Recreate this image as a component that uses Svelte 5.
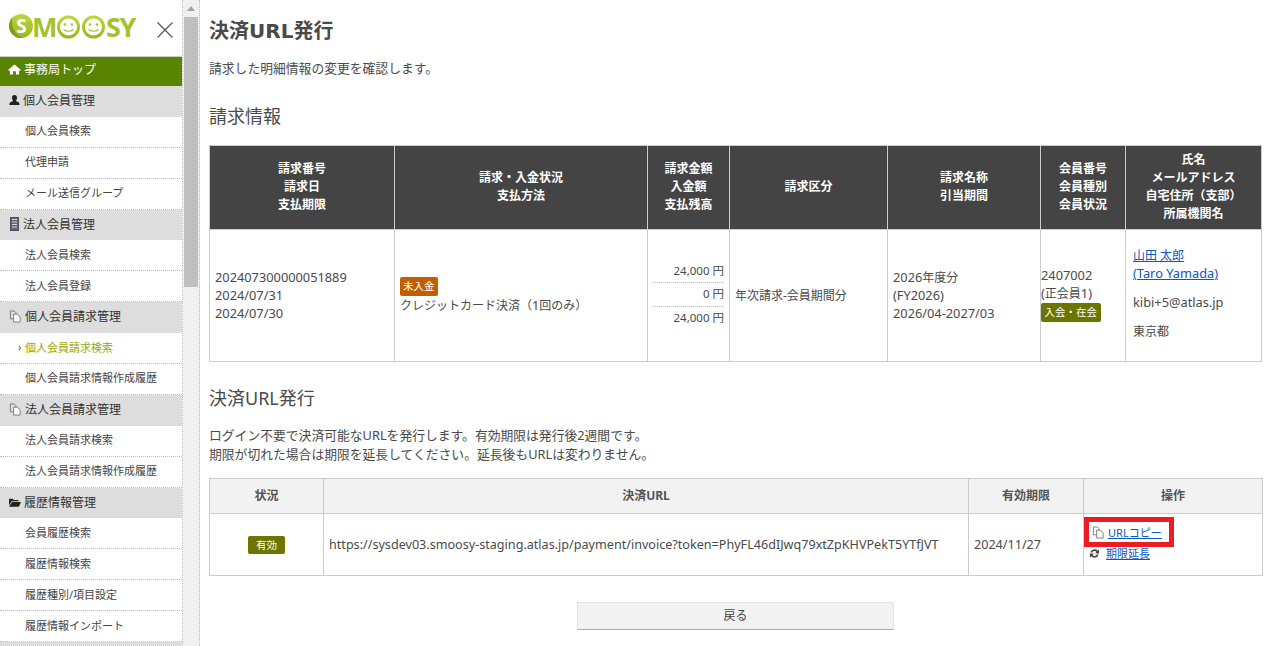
<script>
  const nav = [
    { head: '個人会員管理', icon: 'user', items: ['個人会員検索', '代理申請', 'メール送信グループ'] },
    { head: '法人会員管理', icon: 'building', items: ['法人会員検索', '法人会員登録'] },
    { head: '個人会員請求管理', icon: 'copy', items: ['個人会員請求検索', '個人会員請求情報作成履歴'] },
    { head: '法人会員請求管理', icon: 'copy', items: ['法人会員請求検索', '法人会員請求情報作成履歴'] },
    { head: '履歴情報管理', icon: 'folder', items: ['会員履歴検索', '履歴情報検索', '履歴種別/項目設定', '履歴情報インポート'] }
  ];
  const active = '個人会員請求検索';
</script>

{#snippet copyIcon()}
  <svg class="ico" viewBox="0 0 14 14" width="13" height="13">
    <path d="M1.5 1h4l2 2v1.5M1.5 1v8.5h3" fill="none" stroke="#777" stroke-width="1"/>
    <path d="M5 4.5h4l3 3v5.500H5z" fill="#fff" stroke="#777" stroke-width="1"/>
  </svg>
{/snippet}

<div class="page">
  <aside class="side">
    <div class="logo-row">
      <svg class="logo" viewBox="0 -6 130 40" width="130" height="40">
        <defs>
          <linearGradient id="lg" x1="0" y1="0" x2="0" y2="1">
            <stop offset="0" stop-color="#bcd53f"/>
            <stop offset="1" stop-color="#98b921"/>
          </linearGradient>
        </defs>
        <circle cx="12" cy="13" r="12" fill="url(#lg)"/>
        <path d="M4 4A12 12 0 0 0 14 24.800 16 16 0 0 1 4 4z" fill="#7f9c1a"/>
        <text x="12.500" y="20" class="logo-s" text-anchor="middle">S</text>
        <text x="23" y="24" class="logo-t">M</text>
        <circle cx="59.500" cy="14" r="10" fill="#fff" stroke="url(#lg)" stroke-width="3"/>
        <circle cx="84.500" cy="14" r="10" fill="#fff" stroke="url(#lg)" stroke-width="3"/>
        <g fill="#a5c22e">
          <circle cx="56" cy="11.500" r="1.300"/><circle cx="63" cy="11.500" r="1.300"/>
          <circle cx="81" cy="11.500" r="1.300"/><circle cx="88" cy="11.500" r="1.300"/>
        </g>
        <path d="M54.500 16.500q5 3.500 10 0M79.500 16.500q5 3.500 10 0" fill="none" stroke="#a5c22e" stroke-width="1.200"/>
        <text x="97" y="24" class="logo-t narrow">SY</text>
      </svg>
      <svg class="close" viewBox="0 0 18 18" width="18" height="18">
        <path d="M1.500 1.500l15 15M16.500 1.500l-15 15" stroke="#555" stroke-width="1.200" fill="none"/>
      </svg>
    </div>
    <a class="top" href="#top">
      <svg viewBox="0 0 14 12" width="13" height="11"><path d="M7 .5L0 6.500l1 1 1-.8V11.500h3.500V8h3v3.500H12V6.700l1 .8 1-1z" fill="#fff"/></svg>
      事務局トップ
    </a>
    {#each nav as group}
      <div class="head">
        {#if group.icon === 'user'}
          <svg class="ico" viewBox="0 0 12 12" width="11" height="12"><path d="M6 .5c1.800 0 2.800 1.300 2.800 3S7.800 6.500 7.500 7.200c1.500.6 4 1 4 3.300V11.500H.5V10.500c0-2.300 2.500-2.700 4-3.300C4.200 6.500 3.200 5.200 3.200 3.500S4.200.5 6 .5z" fill="#222"/></svg>
        {:else if group.icon === 'building'}
          <svg class="ico" viewBox="0 0 11 14" width="11" height="14"><rect x="1.500" y="0.500" width="8" height="13" fill="#5f6872" stroke="#4a525b"/><path d="M3 2.500h5M3 5h5M3 7.500h5M3 10h5" stroke="#d5d9de" stroke-width="1"/></svg>
        {:else if group.icon === 'copy'}
          {@render copyIcon()}
        {:else}
          <svg class="ico" viewBox="0 0 14 12" width="12" height="11"><path d="M0 1.500h4.500l1 1.500H11v1.500H3L0 9.500z" fill="#222"/><path d="M3.500 5.500H14L11.500 11H0z" fill="#222"/></svg>
        {/if}
        {group.head}
      </div>
      {#each group.items as item}
        <a class="item" class:active={item === active} href="#item">{item}</a>
      {/each}
    {/each}
    <div class="head"></div>
  </aside>

  <div class="scroll">
    <div class="arrow"></div>
    <div class="thumb"></div>
  </div>

  <main class="main">
    <h1>決済<span class="wide">URL</span>発行</h1>
    <p class="lead">請求した明細情報の変更を確認します。</p>

    <h2>請求情報</h2>
    <table class="t1">
      <colgroup>
        <col style="width:185px"/><col style="width:253px"/><col style="width:82px"/><col style="width:158px"/>
        <col style="width:153px"/><col style="width:85px"/><col style="width:136px"/>
      </colgroup>
      <thead>
        <tr>
          <th>請求番号<br/>請求日<br/>支払期限</th>
          <th>請求・入金状況<br/>支払方法</th>
          <th>請求金額<br/>入金額<br/>支払残高</th>
          <th>請求区分</th>
          <th>請求名称<br/>引当期間</th>
          <th>会員番号<br/>会員種別<br/>会員状況</th>
          <th>氏名<br/>メールアドレス<br/>自宅住所（支部）<br/>所属機関名</th>
        </tr>
      </thead>
      <tbody>
        <tr>
          <td><span class="num">202407300000051889<br/>2024/07/31<br/>2024/07/30</span></td>
          <td class="status"><span class="badge orange">未入金</span><br/>クレジットカード決済（<span class="num">1</span>回のみ）</td>
          <td class="money">
            <div>24,000 円</div>
            <div>0 円</div>
            <div>24,000 円</div>
          </td>
          <td>年次請求-会員期間分</td>
          <td><span class="num">2026</span>年度分<br/><span class="num">(FY2026)<br/>2026/04-2027/03</span></td>
          <td class="member"><span class="num">2407002</span><br/><span class="num">(</span>正会員<span class="num">1)</span><br/><span class="badge olive">入会・在会</span></td>
          <td class="who">
            <p><a href="#member">山田 太郎<br/><span class="num">(Taro Yamada)</span></a></p>
            <p><span class="num">kibi+5@atlas.jp</span></p>
            <p>東京都</p>
          </td>
        </tr>
      </tbody>
    </table>

    <h2 class="second">決済URL発行</h2>
    <p class="note">ログイン不要で決済可能なURLを発行します。有効期限は発行後2週間です。<br/>期限が切れた場合は期限を延長してください。延長後もURLは変わりません。</p>

    <table class="t2">
      <colgroup>
        <col style="width:114px"/><col style="width:645px"/><col style="width:115px"/><col style="width:179px"/>
      </colgroup>
      <thead>
        <tr><th>状況</th><th>決済URL</th><th>有効期限</th><th>操作</th></tr>
      </thead>
      <tbody>
        <tr>
          <td class="center"><span class="badge olive small">有効</span></td>
          <td>https://sysdev03.smoosy-staging.atlas.jp/payment/invoice?token=PhyFL46dIJwq79xtZpKHVPekT5YTfJVT</td>
          <td>2024/11/27</td>
          <td class="ops">
            <div class="op marked">{@render copyIcon()}<a href="#copy">URLコピー</a></div>
            <div class="op">
              <svg class="ico" viewBox="0 0 12 12" width="11" height="11"><path d="M1.500 5A4.700 4.700 0 0 1 9.600 3L11 1.500V6H6.500l1.700-1.700A2.800 2.800 0 0 0 3.400 5zM10.500 7A4.700 4.700 0 0 1 2.400 9L1 10.500V6h4.500L3.800 7.700A2.800 2.800 0 0 0 8.600 7z" fill="#444"/></svg>
              <a href="#extend">期限延長</a>
            </div>
          </td>
        </tr>
      </tbody>
    </table>

    <div class="actions"><button type="button">戻る</button></div>
  </main>
</div>

<style>
  :global(body) {
    margin: 0;
    overflow: hidden;
    background: #fff;
  }
  .page {
    display: flex;
    height: 646px;
    overflow: hidden;
    font-family: "Noto Sans", "Noto Sans CJK JP", sans-serif;
    font-size: 12.6px;
    line-height: 19px;
    color: #4a4a4a;
  }
  .side {
    width: 182px;
    flex: none;
    overflow: hidden;
    border-right: 1px dotted #bbb;
  }
  .logo-row {
    display: flex;
    align-items: flex-start;
    height: 57px;
    padding: 7px 0 0 9px;
    box-sizing: border-box;
    border-bottom: 1px solid #ccc;
    gap: 17px;
  }
  .logo-row .close {
    margin-top: 14px;
  }
  .logo-s {
    font: 700 19px "Noto Sans", sans-serif;
    fill: #fff;
  }
  .logo-t {
    font: 700 27px "Noto Sans", sans-serif;
    fill: #a4c22c;
  }
  .logo-t.narrow {
    letter-spacing: -1.5px;
  }
  .top {
    display: flex;
    align-items: center;
    gap: 3px;
    height: 29px;
    box-sizing: border-box;
    padding: 0 0 5px 8px;
    background: #588400;
    color: #fff;
    font-size: 12px;
    text-decoration: none;
  }
  .head {
    display: flex;
    align-items: center;
    gap: 3px;
    height: 30.9px;
    box-sizing: border-box;
    padding: 0 0 2px 9px;
    background: #dddddd;
    color: #333;
    font-size: 12px;
  }
  .ico {
    flex: none;
  }
  .item {
    display: flex;
    align-items: center;
    height: 30.9px;
    box-sizing: border-box;
    padding: 0 0 2px 25px;
    border-bottom: 1px dotted #bbb;
    color: #444;
    font-size: 11px;
    text-decoration: none;
  }
  .item.active {
    color: #98a800;
    position: relative;
  }
  .item.active::before {
    content: "›";
    position: absolute;
    left: 18px;
    top: 4px;
    color: #555;
  }
  .scroll {
    width: 16px;
    flex: none;
    background: #f0f0f0;
    border-right: 1px dotted #bbb;
    position: relative;
  }
  .arrow {
    width: 0;
    margin: 6px auto 0;
    border: 4px solid transparent;
    border-top: 0;
    border-bottom: 5px solid #a3a3a3;
  }
  .thumb {
    position: absolute;
    left: 1px;
    right: 1px;
    top: 17px;
    height: 270px;
    background: #bfbfbf;
  }
  .main {
    flex: 1;
    min-width: 0;
    padding: 0 0 0 9px;
  }
  h1 {
    margin: 18px 0 0;
    font-size: 20px;
    line-height: 26px;
    font-weight: 700;
    color: #4a4a4a;
  }
  .wide {
    font-family: "DejaVu Sans", sans-serif;
  }
  .lead {
    margin: 15px 0 0;
    font-size: 12.8px;
  }
  h2 {
    margin: 26px 0 0;
    font-size: 18px;
    line-height: 24px;
    font-weight: 400;
    color: #4a4a4a;
  }
  table {
    border-collapse: collapse;
    table-layout: fixed;
    width: 1053px;
  }
  th,
  td {
    border: 1px solid #cccccc;
    padding: 0 5px;
  }
  .t1 {
    margin-top: 17px;
  }
  .t1 th {
    height: 81px;
    padding-bottom: 2px;
    background: #444444;
    color: #fff;
    font-size: 12px;
    font-weight: 700;
    line-height: 18px;
  }
  .t1 td {
    height: 131px;
    font-size: 12px;
    line-height: 18px;
  }
  .num {
    font-size: 12.8px;
    line-height: 1;
  }
  .t1 td.status {
    line-height: 20px;
  }
  .t1 td.member {
    padding-left: 0;
    padding-right: 0;
    padding-bottom: 2px;
    height: 129px;
  }
  .t1 td.who {
    padding-left: 7px;
    padding-bottom: 3px;
    height: 128px;
  }
  .who p {
    margin: 0 0 11px;
  }
  .who p:last-child {
    margin: 0;
  }
  .t1 td.money {
    font-size: 11.5px;
    text-align: right;
    padding-bottom: 2px;
    height: 129px;
  }
  .money div {
    padding: 2px 0;
    line-height: 18.5px;
    border-bottom: 1px dotted #bbb;
  }
  .money div:last-child {
    border-bottom: 0;
  }
  a {
    color: #0b57c4;
    text-decoration: underline;
  }
  .badge {
    display: inline-block;
    padding: 0 3px;
    font-size: 10.5px;
    line-height: 19px;
    border-radius: 2px;
    color: #fff;
  }
  .badge.orange {
    background: #c05f00;
  }
  .badge.olive {
    background: #6b7500;
    padding: 0 3.5px;
  }
  .badge.small {
    padding: 0 8px;
    line-height: 18px;
  }
  h2.second {
    margin-top: 24px;
  }
  .note {
    margin: 16px 0 0;
    font-size: 12.8px;
  }
  .t2 {
    margin-top: 14px;
  }
  .t2 th {
    height: 32px;
    padding-bottom: 2px;
    background: #f2f2f2;
    color: #555;
    font-size: 12px;
    font-weight: 700;
  }
  .t2 td {
    height: 61px;
  }
  .center {
    text-align: center;
  }
  .t2 td.ops {
    vertical-align: top;
  }
  .op {
    display: flex;
    align-items: center;
    gap: 6px;
    height: 13px;
    font-size: 11px;
    margin-top: 0;
  }
  .marked {
    margin: 3px 0 0 -5px;
    padding-left: 3px;
    width: 77px;
    height: 20px;
    gap: 3px;
    border: 5px solid #ec1c24;
    box-sizing: content-box;
  }
  .actions {
    display: flex;
    justify-content: center;
    width: 1053px;
    margin-top: 26px;
  }
  button {
    width: 317px;
    height: 28px;
    padding: 0 0 2px;
    border: 1px solid #e4e4e4;
    border-bottom: 1px solid #aaa;
    border-radius: 1px;
    background: #f2f2f2;
    color: #444;
    font: inherit;
    font-size: 12px;
  }
</style>
